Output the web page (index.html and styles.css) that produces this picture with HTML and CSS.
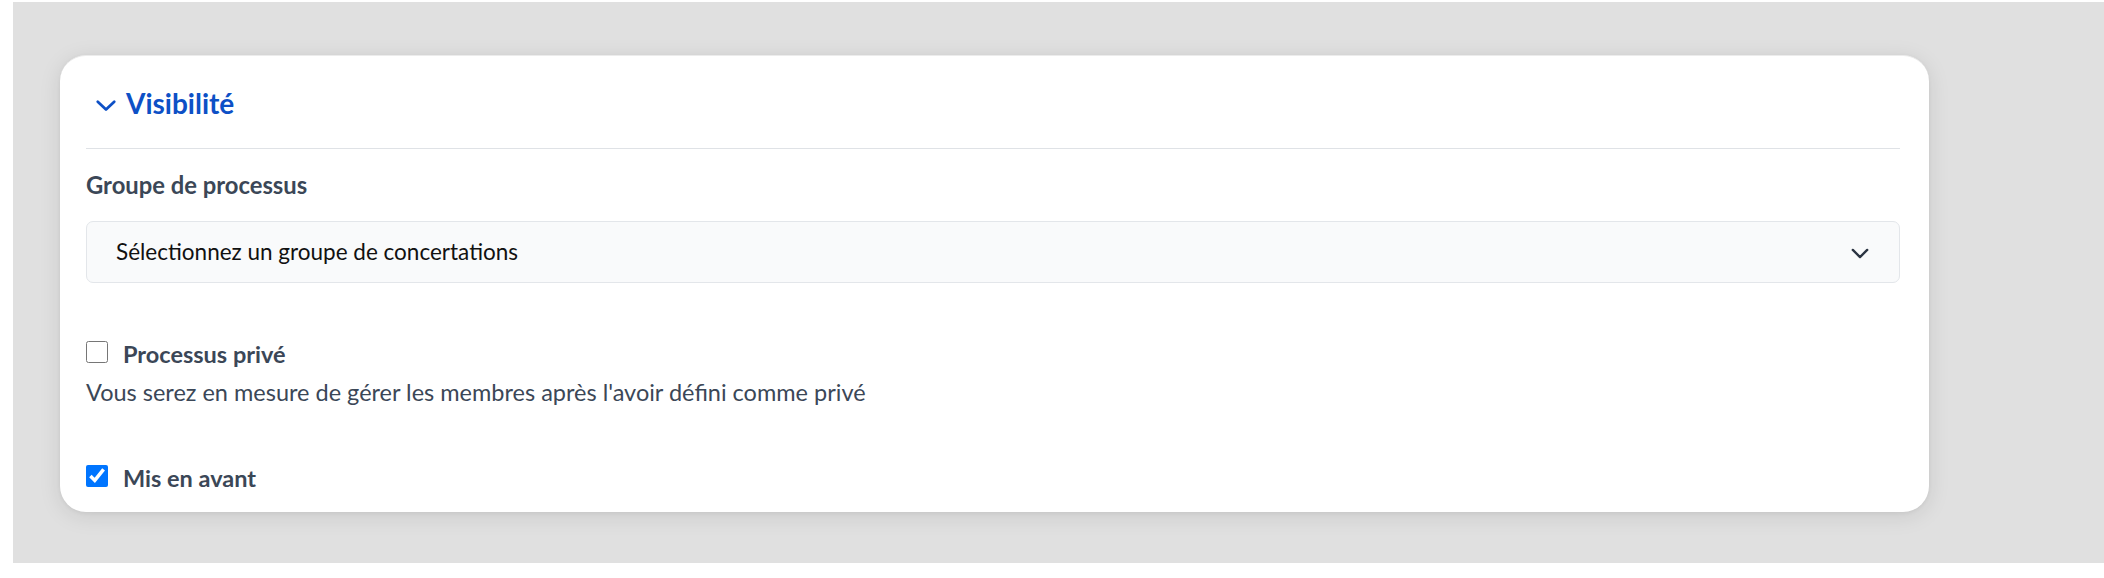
FILE: index.html
```html
<!DOCTYPE html>
<html lang="fr">
<head>
<meta charset="utf-8">
<title>Visibilité</title>
<link rel="stylesheet" href="styles.css">
</head>
<body>
<div class="stage">
  <section class="card">
    <header class="card-header">
      <svg class="toggle-icon" viewBox="0 0 24 24" width="22" height="22" aria-hidden="true"><path d="M3 8.5l9 8.5 9-8.5" fill="none" stroke="currentColor" stroke-width="3" stroke-linecap="round" stroke-linejoin="round"/></svg>
      <h2 class="card-title">Visibilité</h2>
    </header>
    <div class="card-body">
      <label class="field-label" for="group">Groupe de processus</label>
      <div class="select">
        <span class="select-text">Sélectionnez un groupe de concertations</span>
        <svg class="select-icon" viewBox="0 0 20 12" width="18" height="11" aria-hidden="true"><path d="M2 2l8 8 8-8" fill="none" stroke="currentColor" stroke-width="2.6" stroke-linecap="round" stroke-linejoin="round"/></svg>
      </div>
      <div class="check-row first">
        <input type="checkbox" class="check" id="private">
        <label class="check-label" for="private">Processus privé</label>
      </div>
      <p class="help">Vous serez en mesure de gérer les membres après l'avoir défini comme privé</p>
      <div class="check-row second">
        <input type="checkbox" class="check" id="promoted" checked>
        <label class="check-label" for="promoted">Mis en avant</label>
      </div>
    </div>
  </section>
</div>
</body>
</html>
```

FILE: styles.css
```css
html, body {
  margin: 0;
  padding: 0;
  background: #ffffff;
}

body {
  font-family: "Lato", "Noto Sans", sans-serif;
  width: 2104px;
  height: 578px;
  overflow: hidden;
}

.stage {
  margin: 2px 0 0 13px;
  height: 561px;
  background: #e0e0e0;
  padding: 53px 0 0 47px;
  box-sizing: border-box;
}

.card {
  width: 1869px;
  height: 457px;
  box-sizing: border-box;
  background: #ffffff;
  border-radius: 26px;
  border-top: 1px solid #ececec;
  box-shadow: 0 4px 22px rgba(0, 0, 0, 0.10), 0 1px 4px rgba(0, 0, 0, 0.05);
  padding: 0 29px 0 26px;
}

.card-header {
  display: flex;
  align-items: center;
  gap: 9px;
  padding: 25px 0 22px 9px;
  border-bottom: 1px solid #dfe2e6;
  color: #0d50c6;
}

.toggle-icon {
  flex: none;
  margin-top: 2px;
}

.card-title {
  margin: 0;
  font-size: 28px;
  line-height: 45px;
  font-weight: 700;
  color: #0d50c6;
}

.card-body {
  padding-top: 18px;
}

.field-label {
  display: block;
  font-size: 23.8px;
  line-height: 36px;
  font-weight: 700;
  color: #3b4757;
}

.select {
  margin-top: 18px;
  height: 62px;
  box-sizing: border-box;
  border: 1.5px solid #e3e6ea;
  border-radius: 7px;
  background: #f9fafb;
  display: flex;
  align-items: center;
  justify-content: space-between;
  padding: 0 30px 0 29px;
  color: #2b3442;
}

.select-text {
  font-size: 22.5px;
  line-height: 36px;
  color: #111111;
}

.select-icon {
  flex: none;
  margin-top: 2px;
}

.check-row {
  display: flex;
  align-items: flex-start;
  gap: 15px;
}

.check-row.first {
  margin-top: 53px;
}

.check-row.second {
  margin-top: 50px;
}

.check {
  margin: 5px 0 0 0;
  width: 22px;
  height: 22px;
  flex: none;
  accent-color: #0075ff;
}

.check-label {
  font-size: 23.5px;
  line-height: 36px;
  font-weight: 700;
  color: #3b4757;
}

.help {
  margin: 2px 0 0 0;
  font-size: 23.5px;
  line-height: 36px;
  color: #3b4757;
}
```
